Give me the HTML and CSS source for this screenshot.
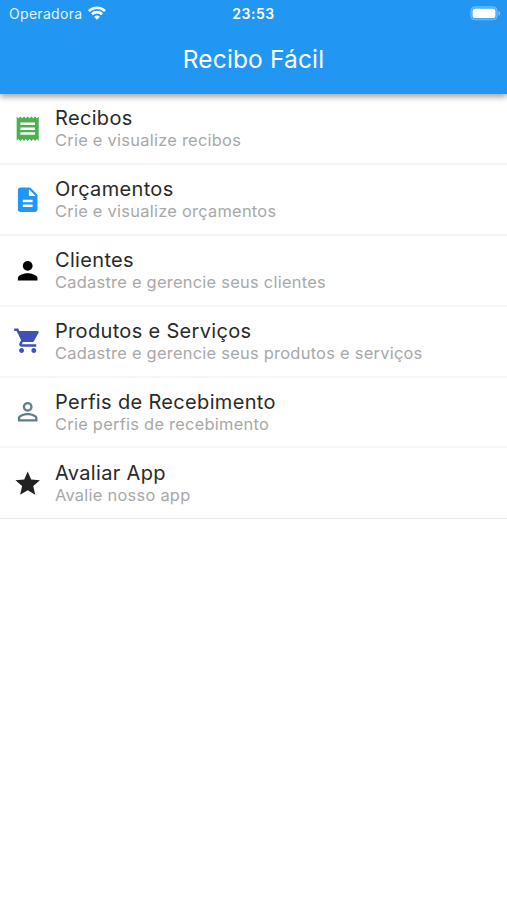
FILE: index.html
```html
<!DOCTYPE html>
<html lang="pt-BR">
<head>
    <meta charset="UTF-8">
    <meta name="viewport" content="width=device-width, initial-scale=1.0">
    <title>Recibo Fácil</title>
    <link rel="stylesheet" href="styles.css">
</head>
<body>
    <header>
        <div class="status-bar">
            <div class="carrier">
                <span>Operadora</span>
                <svg class="wifi" viewBox="0 0 18 14" fill="none" stroke="#fff" stroke-width="2.6">
                    <path d="M.9 5.1a11.6 11.6 0 0 1 16.2 0"/>
                    <path d="M3.9 8.2a7.3 7.3 0 0 1 10.2 0"/>
                    <path d="M9 13.8 6.1 10.8a4.2 4.2 0 0 1 5.8 0z" fill="#fff" stroke="none"/>
                </svg>
            </div>
            <span class="time">23:53</span>
            <div class="battery">
                <svg viewBox="0 0 31 15">
                    <rect x=".8" y=".8" width="26.4" height="13" rx="4" fill="#4dabf6" stroke="#7fc2f9" stroke-width=".8"/>
                    <rect x="2.7" y="2.7" width="22.6" height="9.4" rx="2" fill="#fff"/>
                    <path d="M28.5 5v4.800c2.200-.8 2.200-4 0-4.800z" fill="#7fc2f9"/>
                </svg>
            </div>
        </div>
        <h1>Recibo Fácil</h1>
    </header>
    <ul class="menu">
        <li>
            <svg class="icon green" viewBox="0 0 24 24"><path d="M18 17H6v-2h12v2zm0-4H6v-2h12v2zm0-4H6V7h12v2zM3 22l1.500-1.500L6 22l1.500-1.500L9 22l1.500-1.500L12 22l1.500-1.500L15 22l1.500-1.500L18 22l1.500-1.500L21 22V2l-1.500 1.500L18 2l-1.500 1.500L15 2l-1.500 1.500L12 2l-1.500 1.500L9 2 7.500 3.500 6 2 4.500 3.500 3 2v20z"/></svg>
            <div class="item-text">
                <h2>Recibos</h2>
                <p>Crie e visualize recibos</p>
            </div>
        </li>
        <li>
            <svg class="icon blue" viewBox="0 0 24 24"><path d="M14 2H6c-1.100 0-1.990.9-1.990 2L4 20c0 1.100.89 2 1.990 2H18c1.100 0 2-.9 2-2V8l-6-6zm2 16H8v-2h8v2zm0-4H8v-2h8v2zm-3-5V3.500L18.500 9H13z"/></svg>
            <div class="item-text">
                <h2>Orçamentos</h2>
                <p>Crie e visualize orçamentos</p>
            </div>
        </li>
        <li>
            <svg class="icon black" viewBox="0 0 24 24"><path d="M12 12c2.210 0 4-1.790 4-4s-1.790-4-4-4-4 1.790-4 4 1.790 4 4 4zm0 2c-2.670 0-8 1.340-8 4v2h16v-2c0-2.660-5.330-4-8-4z"/></svg>
            <div class="item-text">
                <h2>Clientes</h2>
                <p>Cadastre e gerencie seus clientes</p>
            </div>
        </li>
        <li>
            <svg class="icon indigo" viewBox="0 0 24 24"><path d="M7 18c-1.100 0-1.990.9-1.990 2S5.900 22 7 22s2-.9 2-2-.9-2-2-2zM1 2v2h2l3.600 7.590-1.350 2.450c-.16.28-.25.61-.25.96 0 1.100.9 2 2 2h12v-2H7.420c-.14 0-.25-.11-.25-.25l.03-.12.9-1.630h7.450c.75 0 1.410-.41 1.750-1.030l3.580-6.490c.08-.14.12-.31.12-.48 0-.55-.45-1-1-1H5.210l-.94-2H1zm16 16c-1.100 0-1.990.9-1.990 2s.89 2 1.990 2 2-.9 2-2-.9-2-2-2z"/></svg>
            <div class="item-text">
                <h2>Produtos e Serviços</h2>
                <p>Cadastre e gerencie seus produtos e serviços</p>
            </div>
        </li>
        <li>
            <svg class="icon blue-grey" viewBox="0 0 24 24"><path d="M12 5.900a2.100 2.100 0 1 1 0 4.200 2.100 2.100 0 0 1 0-4.200m0 9c2.970 0 6.100 1.460 6.100 2.100v1.100H5.900V17c0-.64 3.130-2.100 6.100-2.100M12 4C9.790 4 8 5.790 8 8s1.790 4 4 4 4-1.790 4-4-1.790-4-4-4zm0 9c-2.670 0-8 1.340-8 4v3h16v-3c0-2.660-5.330-4-8-4z"/></svg>
            <div class="item-text">
                <h2>Perfis de Recebimento</h2>
                <p>Crie perfis de recebimento</p>
            </div>
        </li>
        <li>
            <svg class="icon dark" viewBox="0 0 24 24"><path d="M12 17.270 18.180 21l-1.640-7.030L22 9.240l-7.190-.61L12 2 9.190 8.630 2 9.240l5.460 4.730L5.820 21z"/></svg>
            <div class="item-text">
                <h2>Avaliar App</h2>
                <p>Avalie nosso app</p>
            </div>
        </li>
    </ul>
</body>
</html>
```
FILE: styles.css
```css
* {
    margin: 0;
    padding: 0;
    box-sizing: border-box;
    font-family: Inter, 'Liberation Sans', sans-serif;
}

body {
    background: #fff;
}

header {
    height: 94px;
    background: #2196f3;
    color: #fff;
    box-shadow: 0 3px 6px rgba(0, 0, 0, .36);
}

.status-bar {
    display: grid;
    grid-template-columns: 1fr auto 1fr;
    align-items: center;
    height: 26px;
    padding: 1px 6px 0 9px;
}

.carrier {
    display: flex;
    align-items: center;
    gap: 6px;
    font-size: 14px;
    letter-spacing: .3px;
    color: #e3f2fe;
}

.wifi {
    width: 18px;
    height: 14px;
    margin-top: -1px;
}

.time {
    margin-left: -3px;
    font-size: 14px;
    font-weight: 600;
    letter-spacing: .5px;
}

.battery {
    display: flex;
    justify-content: flex-end;
}

.battery svg {
    width: 31px;
    height: 15px;
}

h1 {
    font-size: 24.5px;
    font-weight: 400;
    line-height: 67px;
    text-align: center;
    letter-spacing: .15px;
}

.menu {
    list-style: none;
}

.menu li {
    display: flex;
    align-items: center;
    height: 70.9px;
    padding: 0 13px;
    gap: 12.6px;
    border-bottom: 2px solid #f5f5f5;
}

.menu li:last-child {
    border-bottom: 1px solid #e9e9e9;
}

.icon {
    width: 29.4px;
    height: 29.4px;
    flex-shrink: 0;
}

.item-text h2 {
    font-size: 20px;
    font-weight: 400;
    line-height: 24px;
    letter-spacing: .33px;
    color: #2a2a2a;
}

.item-text p {
    font-size: 16.4px;
    line-height: 20px;
    letter-spacing: .27px;
    color: #a8a8a8;
}

.green {
    fill: #4caf50;
}

.blue {
    fill: #2196f3;
}

.black {
    fill: #000;
}

.indigo {
    fill: #3f51b5;
}

.blue-grey {
    fill: #607d8b;
}

.dark {
    fill: #212121;
}
```
